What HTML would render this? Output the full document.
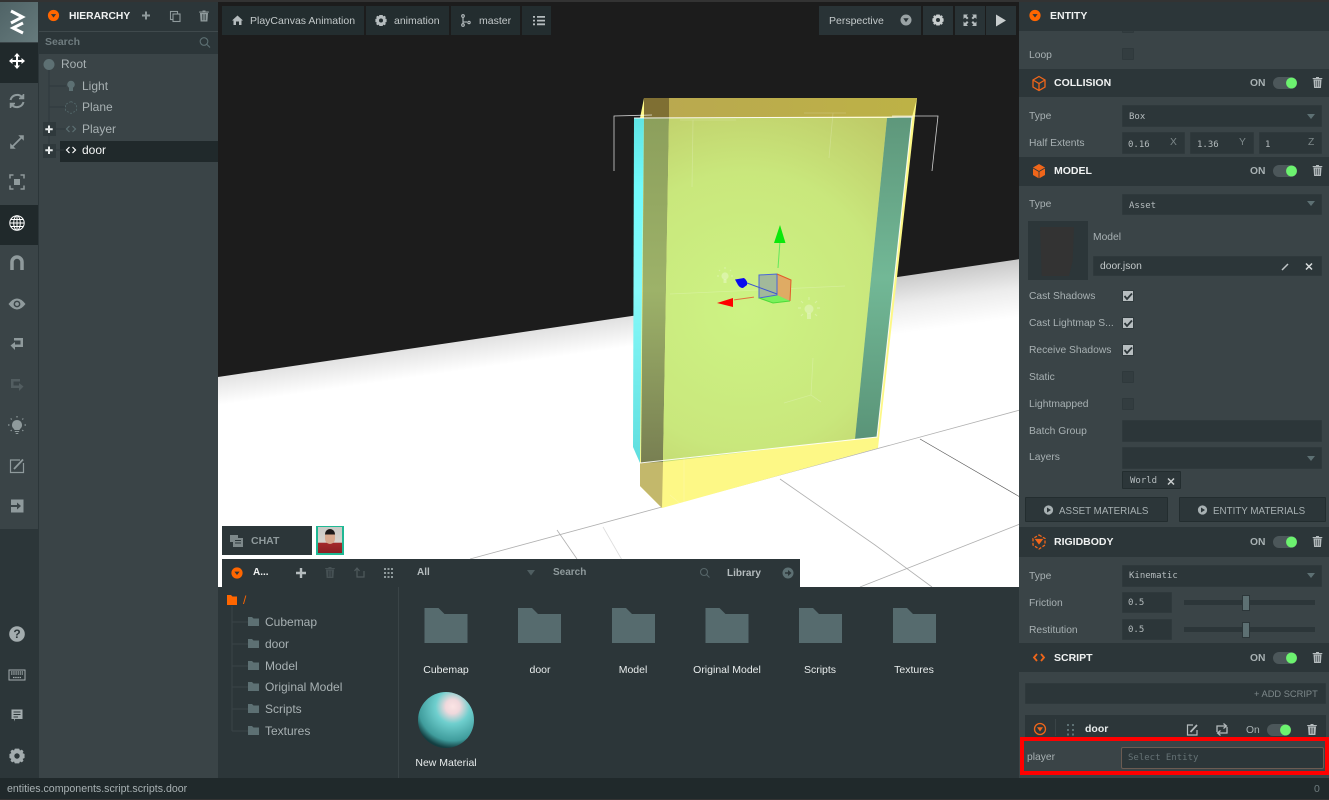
<!DOCTYPE html>
<html><head><meta charset="utf-8"><title>PlayCanvas Editor</title>
<style>
html,body{margin:0;padding:0;width:1329px;height:800px;overflow:hidden;background:#1c1c1c}
body{position:relative;font-family:"Liberation Sans",sans-serif;font-size:11px;color:#b5bcbe}
.b{position:absolute}
.t{position:absolute;white-space:nowrap;line-height:14px;height:14px}
.c{transform:translateX(-50%)}
.m{font-family:"DejaVu Sans Mono","Liberation Mono",monospace;font-size:9px;color:#b5bcbe}
.h{font-weight:bold;color:#f0f2f2;font-size:10.5px}
.l{color:#a8b1b3;font-size:10.3px;margin-top:1px}
.i{position:absolute;background:#2c3639;box-sizing:border-box;border:1px solid #2f393c;border-radius:1px}
.w{color:#e8ecec;font-size:10.5px}
svg{position:absolute;left:0;top:0}
</style></head><body>
<svg width="1329" height="800" viewBox="0 0 1329 800">
<defs>
<linearGradient id="fr" gradientUnits="userSpaceOnUse" x1="950" y1="268" x2="958" y2="326"><stop offset="0" stop-color="#c8c8c8"/><stop offset=".5" stop-color="#ececec"/><stop offset="1" stop-color="#fff"/></linearGradient>
<linearGradient id="fk" gradientUnits="userSpaceOnUse" x1="420" y1="348" x2="424" y2="376"><stop offset="0" stop-color="#e2e2e2"/><stop offset="1" stop-color="#fff"/></linearGradient>
<radialGradient id="gf" gradientUnits="userSpaceOnUse" cx="745" cy="310" r="230"><stop offset="0" stop-color="#cdf384"/><stop offset=".6" stop-color="#c9e77c"/><stop offset="1" stop-color="#bfcb68"/></radialGradient>
<linearGradient id="tp" x1="0" y1="0" x2="1" y2="0"><stop offset="0" stop-color="#b9a850"/><stop offset="1" stop-color="#bdb246"/></linearGradient>
<linearGradient id="ol" x1="0" y1="0" x2="0" y2="1"><stop offset="0" stop-color="#8c9f5c"/><stop offset=".5" stop-color="#9db269"/><stop offset="1" stop-color="#787f52"/></linearGradient>
<linearGradient id="te" x1="0" y1="0" x2="0" y2="1"><stop offset="0" stop-color="#5e977b"/><stop offset=".5" stop-color="#72b896"/><stop offset="1" stop-color="#5a9478"/></linearGradient>
<linearGradient id="cy" x1="0" y1="0" x2="0" y2="1"><stop offset="0" stop-color="#5fe4e4"/><stop offset=".2" stop-color="#70fbfb"/><stop offset=".5" stop-color="#86fafa"/><stop offset="1" stop-color="#5fdede"/></linearGradient>
<radialGradient id="sp" cx=".62" cy=".26" r=".85"><stop offset="0" stop-color="#fbe4e4"/><stop offset=".15" stop-color="#f0d8dc"/><stop offset=".36" stop-color="#6fcfce"/><stop offset=".72" stop-color="#3f9c9c"/><stop offset=".87" stop-color="#143f42"/><stop offset="1" stop-color="#123436"/></radialGradient>
<g id="tr"><path d="M-4 -3.5H4L3.4 5H-3.4Z" fill="currentColor"/><path d="M-4.8 -5H4.8V-3.9H-4.8ZM-1.5 -6H1.5V-5H-1.5Z" fill="currentColor"/><path d="M-1.7 -2.4V3.8M0 -2.4V3.8M1.7 -2.4V3.8" stroke="#2c3639" stroke-width=".6"/></g>
<g id="or"><circle r="5.6" fill="#f60"/><path d="M-2.6 -1.4H2.6L0 2Z" fill="#2c3639"/></g>
<g id="fo"><path d="M0 0H14L20 6H43V35H0Z" fill="#566b6e"/></g>
<g id="sf"><path d="M0 0H4L5.5 1.5H11V9H0Z" fill="#5d7073"/></g>
<g id="gr"><path d="M-1.6 -5.5H1.6L2.2 -4.1 3.6 -4.7 4.8 -3.5 4.2 -2.1 5.6 -1.5V1.5L4.2 2.1 4.8 3.5 3.6 4.7 2.2 4.1 1.6 5.5H-1.6L-2.2 4.1-3.6 4.7-4.8 3.5-4.2 2.1-5.6 1.5V-1.5L-4.2 -2.1-4.8 -3.5-3.6 -4.7-2.2 -4.1Z" fill="currentColor"/><circle r="2" fill="var(--h,#232d2f)"/></g>
<g id="tg"><rect x="-12" y="-6" width="24" height="12" rx="6" fill="#4c575a"/><circle cx="6.5" r="5.4" fill="#6cf26f"/></g>
</defs>

<!-- viewport -->
<rect x="218" y="0" width="802" height="590" fill="#1c1c1c"/>
<path d="M218 377 L700 306 V590 H218Z" fill="url(#fk)"/>
<path d="M700 306 L1020 259 V590 H700Z" fill="url(#fr)"/>
<g stroke="#b0b0b0" stroke-width=".8" fill="none">
<path d="M470 559L1020 410"/><path d="M557 530L577 559"/><path d="M780 479L875 545 932 587"/><path d="M860 587L1020 524"/>
<path d="M603 527L622 560" stroke="#ddd"/>
</g>
<path d="M920 439L1020 497" stroke="#555" stroke-width=".6" fill="none"/>
<!-- door -->
<path d="M644 98H917L878 448 662 508 640 486V118Z" fill="#fdf886"/>
<path d="M640 463L663 462 662 508 640 486Z" fill="#c3b86b"/>
<path d="M644 98H917L912 117 644 118Z" fill="url(#tp)"/>
<path d="M644 98H669V118H644Z" fill="#7f6f33"/>
<path d="M634 118H644L640 463 633 447Z" fill="url(#cy)"/>
<path d="M644 118H669L663 462 641 463Z" fill="url(#ol)"/>
<path d="M669 118H887L855 439 663 462Z" fill="url(#gf)"/>
<path d="M887 118L912 117 877 437 855 439Z" fill="url(#te)"/>
<path d="M634 118L912 117 877 437 640 463" fill="none" stroke="#fff" stroke-opacity=".9" stroke-width="1"/>
<g fill="none" stroke="#fff" stroke-opacity=".8" stroke-width=".8">
<path d="M614 171V116L652 115M892 116H938L932 171"/>
</g>
<g fill="none" stroke="#fff" stroke-opacity=".2" stroke-width=".8">
<path d="M680 120L736 120M693 120L692 187M804 113H846M833 113L829 158M670 294L845 286M813 358L811 395 784 403M811 395L821 402M684 457V505M670 495L683 506"/>
</g>
<!-- gizmo -->
<path d="M759 275L777 274 791 280 790 301 773 303 759 298Z" fill="#a2b99a"/>
<path d="M777 274L791 280 790 301 777 295Z" fill="#dfab64"/>
<path d="M759 298L777 295 790 301 773 303Z" fill="#7bf05b"/>
<path d="M759 275L777 274V295L759 298Z" fill="none" stroke="#4a66d8"/>
<path d="M777 274L791 280 790 301" fill="none" stroke="#e25a2a"/>
<path d="M759 298L773 303 790 301" fill="none" stroke="#4ddb3a"/>
<path d="M778 268L780 241" stroke="#62e85a" stroke-width="1"/>
<path d="M780 225L785.500 243H774Z" fill="#0be80b"/>
<path d="M777 294L747 283" stroke="#3c55d0" stroke-width="1"/>
<path d="M735 279.500L744 278Q748 281 747 285L743 288Q740 288 738 285Z" fill="#0a0aee"/>
<path d="M734 299L754 298" stroke="#e2703c" stroke-width="1" transform="rotate(-5 744 298)"/>
<path d="M717 303L733 298V307Z" fill="#f00"/>
<g fill="#fff" fill-opacity=".3"><circle cx="725" cy="276" r="3.600"/><rect x="723.500" y="279" width="3" height="4"/><circle cx="809" cy="309" r="4.500"/><rect x="807" y="313" width="4" height="6"/></g>
<g stroke="#fff" stroke-opacity=".25" stroke-width="1.200" fill="none"><path d="M725 267v2M717 276h2M731 276h2M719 270l1 1M730 271l1-1M809 297v3M798 308h3M817 308h3M801 301l2 2M815 303l2-2M801 316l2-2M815 314l2 2"/></g>
</svg>

<!-- top bar buttons -->
<div class="b" style="left:222px;top:6px;width:142px;height:29px;background:#232d2f"></div>
<div class="b" style="left:366px;top:6px;width:83px;height:29px;background:#232d2f"></div>
<div class="b" style="left:451px;top:6px;width:69px;height:29px;background:#232d2f"></div>
<div class="b" style="left:522px;top:6px;width:29px;height:29px;background:#232d2f"></div>
<div class="b" style="left:819px;top:6px;width:102px;height:29px;background:#293336"></div>
<div class="b" style="left:923px;top:6px;width:30px;height:29px;background:#293336"></div>
<div class="b" style="left:955px;top:6px;width:30px;height:29px;background:#293336"></div>
<div class="b" style="left:986px;top:6px;width:30px;height:29px;background:#293336"></div>

<!-- panels -->
<div class="b" style="left:0;top:0;width:1329px;height:2px;background:#333"></div>
<div class="b" style="left:0;top:2px;width:38px;height:776px;background:#3a4447"></div>
<div class="b" style="left:38px;top:2px;width:1px;height:776px;background:#2c3639"></div>
<div class="b" style="left:0;top:2px;width:38px;height:40px;background:linear-gradient(135deg,#4f6366,#667a7c)"></div>
<div class="b" style="left:0;top:43px;width:38px;height:40px;background:#20292b"></div>
<div class="b" style="left:0;top:205px;width:38px;height:40px;background:#20292b"></div>
<div class="b" style="left:0;top:529px;width:38px;height:249px;background:#2c3639"></div>
<div class="b" style="left:39px;top:2px;width:179px;height:776px;background:#3a4447"></div>
<div class="b" style="left:39px;top:2px;width:179px;height:29px;background:#2c3639"></div>
<div class="b" style="left:39px;top:31px;width:179px;height:1px;background:#3f494c"></div>
<div class="b" style="left:39px;top:32px;width:179px;height:22px;background:#2c3639"></div>
<div class="b" style="left:60px;top:141px;width:158px;height:21px;background:#20292b"></div>
<div class="b" style="left:43px;top:122px;width:13px;height:14px;background:#2f393c"></div>
<div class="b" style="left:43px;top:144px;width:13px;height:14px;background:#2f393c"></div>

<div class="b" style="left:222px;top:526px;width:90px;height:29px;background:#2c3639"></div>
<div class="b" style="left:316px;top:526px;width:28px;height:29px;background:#1fb894"></div>
<div class="b" style="left:318px;top:527px;width:24px;height:26px;background:linear-gradient(#c9c9c5 0,#d8d4cd 60%,#a32a2a 61%,#8c1f24 100%)"></div>
<div class="b" style="left:325px;top:529px;width:10px;height:15px;border-radius:5px;background:linear-gradient(#1d1a1a 35%,#d7a98e 36%)"></div>
<div class="b" style="left:222px;top:559px;width:578px;height:28px;background:#2c3639"></div>
<div class="b" style="left:218px;top:587px;width:801px;height:191px;background:#2c3639"></div>
<div class="b" style="left:398px;top:587px;width:1px;height:191px;background:#3a4447"></div>

<div class="b" style="left:1019px;top:2px;width:310px;height:776px;background:#3a4447"></div>
<div class="b" style="left:1019px;top:2px;width:310px;height:29px;background:#2c3639"></div>
<div class="b" style="left:1019px;top:69px;width:310px;height:28px;background:#2c3639"></div>
<div class="b" style="left:1019px;top:157px;width:310px;height:29px;background:#2c3639"></div>
<div class="b" style="left:1019px;top:527px;width:310px;height:30px;background:#2c3639"></div>
<div class="b" style="left:1019px;top:643px;width:310px;height:29px;background:#2c3639"></div>
<div class="b" style="left:1025px;top:715px;width:301px;height:23px;background:#2c3639"></div>
<div class="b" style="left:0;top:778px;width:1329px;height:22px;background:#20292b"></div>
<div class="b" style="left:0;top:799px;width:1329px;height:1px;background:#333"></div>

<!-- inputs -->
<div class="i" style="left:1122px;top:21px;width:12px;height:12px;background:#333d40"></div>
<div class="b" style="left:1019px;top:2px;width:310px;height:29px;background:#2c3639"></div>
<div class="i" style="left:1122px;top:48px;width:12px;height:12px;background:#333d40"></div>
<div class="i" style="left:1122px;top:105px;width:200px;height:22px"></div>
<div class="i" style="left:1122px;top:132px;width:63px;height:22px"></div>
<div class="i" style="left:1190px;top:132px;width:64px;height:22px"></div>
<div class="i" style="left:1259px;top:132px;width:63px;height:22px"></div>
<div class="i" style="left:1122px;top:194px;width:200px;height:21px"></div>
<div class="b" style="left:1028px;top:221px;width:60px;height:59px;background:#2c3639"></div>
<div class="b" style="left:1040px;top:227px;width:34px;height:49px;background:#333;clip-path:polygon(0 0,100% 0,96% 70%,85% 100%,5% 100%)"></div>
<div class="i" style="left:1093px;top:256px;width:229px;height:20px"></div>
<div class="i" style="left:1122px;top:290px;width:12px;height:12px;background:#b7bec0"></div>
<div class="i" style="left:1122px;top:317px;width:12px;height:12px;background:#b7bec0"></div>
<div class="i" style="left:1122px;top:344px;width:12px;height:12px;background:#b7bec0"></div>
<div class="i" style="left:1122px;top:371px;width:12px;height:12px;background:#333d40"></div>
<div class="i" style="left:1122px;top:398px;width:12px;height:12px;background:#333d40"></div>
<div class="i" style="left:1122px;top:420px;width:200px;height:22px"></div>
<div class="i" style="left:1122px;top:447px;width:200px;height:22px"></div>
<div class="i" style="left:1122px;top:471px;width:59px;height:18px;border-color:#232d2f"></div>
<div class="i" style="left:1025px;top:497px;width:143px;height:25px;border-color:#232d2f"></div>
<div class="i" style="left:1179px;top:497px;width:147px;height:25px;border-color:#232d2f"></div>
<div class="i" style="left:1122px;top:565px;width:200px;height:22px"></div>
<div class="i" style="left:1122px;top:592px;width:50px;height:21px"></div>
<div class="i" style="left:1122px;top:619px;width:50px;height:21px"></div>
<div class="b" style="left:1184px;top:600px;width:131px;height:5px;background:#2c3639"></div>
<div class="b" style="left:1184px;top:627px;width:131px;height:5px;background:#2c3639"></div>
<div class="b" style="left:1242px;top:595px;width:8px;height:16px;background:#5d7073;border:1px solid #2c3639;box-sizing:border-box"></div>
<div class="b" style="left:1242px;top:622px;width:8px;height:16px;background:#5d7073;border:1px solid #2c3639;box-sizing:border-box"></div>
<div class="i" style="left:1025px;top:683px;width:301px;height:21px"></div>
<div class="i" style="left:1121px;top:747px;width:203px;height:22px;border:1px solid #6b5b52;border-radius:2px;background:#2c3639"></div>
<div class="b" style="left:1020px;top:737px;width:309px;height:38px;border:4px solid #f00;box-sizing:border-box"></div>

<!-- icons overlay -->
<svg width="1329" height="800" viewBox="0 0 1329 800">
<!-- logo -->
<g fill="none" stroke="#fff" stroke-width="3"><path d="M11 11L22.500 17 11 23"/><path d="M23 23L13 28 23 33"/></g>
<!-- left rail -->
<g fill="#fff" transform="translate(17,61)"><path d="M-1 -5H1V5H-1ZM-5 -1H5V1H-5Z"/><path d="M0 -8L3 -4.500H-3ZM0 8L3 4.500H-3ZM-8 0L-4.500 -3V3ZM8 0L4.500 -3V3Z"/></g>
<g fill="none" stroke="#8f9a9c" stroke-width="2" transform="translate(17,101)"><path d="M-6.500 -1A6.800 6.800 0 0 1 5 -4M6.500 1A6.800 6.800 0 0 1 -5 4"/><path d="M6.500 -7V-2.500H2M-6.500 7V2.500H-2" stroke-width="1.500" fill="#8f9a9c"/></g>
<g transform="translate(17,142)" stroke="#8f9a9c" stroke-width="1.800" fill="#8f9a9c"><path d="M-5 5L5 -5" fill="none"/><path d="M2 -6.500H6.500V-2ZM-6.500 2V6.500H-2Z" stroke-width=".6"/></g>
<g transform="translate(17,182)" fill="none" stroke="#8f9a9c" stroke-width="1.500"><path d="M-7 -3.500V-7H-3.500M3.500 -7H7V-3.500M7 3.500V7H3.500M-3.500 7H-7V3.500"/><rect x="-3" y="-3" width="6" height="6" fill="#8f9a9c" stroke="none"/></g>
<g transform="translate(17,223)" fill="none" stroke="#fff" stroke-width="1"><circle r="7.200"/><ellipse rx="3.300" ry="7.200"/><path d="M0 -7V7M-7 0H7M-6.300 -3.500H6.300M-6.300 3.500H6.300"/></g>
<g transform="translate(17,263)" fill="none" stroke="#8f9a9c" stroke-width="3.500"><path d="M-5 7V-1A5 5 0 0 1 5 -1V7"/></g>
<g transform="translate(17,304)"><path d="M-8.500 0Q0 -11 8.500 0Q0 11 -8.500 0Z" fill="#8f9a9c"/><circle r="3.400" fill="#3a4447"/><circle r="1.900" fill="#8f9a9c"/></g>
<g transform="translate(17,344)" fill="#8f9a9c"><path d="M-3 -6H6V3H-2V0.500H3.500V-3.500H-3Z"/><path d="M-6.500 1.500L-2 -2V6Z"/></g>
<g transform="translate(17,385)" fill="#525d60"><path d="M3 -6H-6V3H2V0.500H-3.500V-3.500H3Z"/><path d="M6.500 1.500L2 -2V6Z"/></g>
<g transform="translate(17,425)" fill="#8f9a9c"><path d="M0 -5A5 5 0 0 1 3 4L2.500 5H-2.500L-3 4A5 5 0 0 1 0 -5Z"/><path d="M-2.200 6H2.200V7H-2.200ZM-1.300 8H1.300V9H-1.300Z"/><path d="M0 -9v1.500M-6.300 -6.500l1 1M6.300 -6.500l-1 1M-9 0h1.500M9 0h-1.500M-6.300 6l1 -1M6.300 6l-1 -1" stroke="#8f9a9c" stroke-width="1.200"/></g>
<g transform="translate(17,466)" fill="none" stroke="#8f9a9c" stroke-width="1.200"><path d="M3 -6H-6.500V6.500H6.500V-3"/><path d="M-3 3L6 -6.500" stroke-width="1.800"/></g>
<g transform="translate(17,506)"><rect x="-6" y="-6.500" width="12.500" height="13" fill="#8f9a9c"/><path d="M-6.500 -1H0V-3.500L4 0 0 3.500V1H-6.500Z" fill="#3a4447"/></g>
<g transform="translate(17,634)"><circle r="7.800" fill="#a3acae"/><text x="0" y="4.200" text-anchor="middle" font-family="Liberation Sans" font-weight="bold" font-size="12" fill="#2c3639">?</text></g>
<g transform="translate(17,675)"><rect x="-8" y="-5" width="16" height="10" fill="none" stroke="#a3acae" stroke-width="1"/><path d="M-6 -3H6M-6 -1H6M-4 2.500H4" stroke="#a3acae" stroke-width="1.300" stroke-dasharray="1.500 .7"/></g>
<g transform="translate(17,715)" fill="#a3acae"><path d="M-5.500 -5.500H5.500V4H-2L-3 6.500V4H-5.500Z"/><path d="M-3.500 -3H3.500M-3.500 -.5H3.500M-3.500 2H1" stroke="#2c3639" stroke-width="1"/></g>
<g transform="translate(17,756) scale(1.350)" color="#a3acae" style="--h:#2c3639"><use href="#gr"/></g>

<!-- hierarchy -->
<use href="#or" x="53.500" y="15.500"/>
<g fill="#8f9a9c"><path d="M145 11.500h2v8h-2zM142 14.500h8v2h-8z"/></g>
<g fill="none" stroke="#8f9a9c" stroke-width="1.100"><rect x="170.500" y="11.500" width="7" height="8"/><rect x="173" y="14" width="7" height="7.500" fill="#2c3639"/></g>
<use href="#tr" x="204" y="16.500" color="#8f9a9c"/>
<g fill="none" stroke="#5d7073" stroke-width="1.100"><circle cx="204" cy="41.500" r="3.800"/><path d="M207 44.500L210 47.500"/></g>
<g fill="none" stroke="#2f393c" stroke-width="1"><path d="M49 64V150M49 86H66M49 107H66M49 129H66M49 150H64"/></g>
<circle cx="49" cy="64.500" r="5.500" fill="#5d7073"/>
<g fill="#5d7073"><circle cx="71" cy="84.500" r="3.800"/><rect x="69" y="87" width="4" height="4"/></g>
<g fill="none" stroke="#4f6265" stroke-width="1" stroke-dasharray="2 1.500"><path d="M71 101.500L76.500 104.500V110.500L71 113.500 65.500 110.500V104.500Z"/></g>
<g fill="none" stroke="#5d7073" stroke-width="1.200"><path d="M69.500 126L66.500 129 69.500 132M72.500 126L75.500 129 72.500 132"/></g>
<g fill="none" stroke="#fff" stroke-width="1.200"><path d="M69.500 147L66.500 150 69.500 153M72.500 147L75.500 150 72.500 153"/></g>
<g fill="#e8ecec"><path d="M48 125.500h2v7.500h-2zM45.300 128.300h7.400v2h-7.400z"/><path d="M48 146.500h2v7.500h-2zM45.300 149.300h7.400v2h-7.400z"/></g>

<!-- topbar icons -->
<g fill="#b5bcbe"><path d="M237.500 15.500L243 20.500H241.500V25H239V21.500H236V25H233.500V20.500H232Z"/></g>
<use href="#gr" x="381" y="20.500" color="#b5bcbe"/>
<g fill="none" stroke="#b5bcbe" stroke-width="1.100"><path d="M463 17.500V24"/><circle cx="463" cy="16" r="1.300"/><circle cx="463" cy="25" r="1.300"/><circle cx="469" cy="22.500" r="1.200"/><path d="M463 22H467"/></g>
<g fill="#b5bcbe"><path d="M533 16h2v1.800h-2zM533 19.700h2v1.800h-2zM533 23.400h2v1.800h-2zM537 16h8v1.800h-8zM537 19.700h8v1.800h-8zM537 23.400h8v1.800h-8z"/></g>
<circle cx="906" cy="20" r="5.500" fill="#9aa3a5"/><path d="M903.300 18.300H908.700L906 22.300Z" fill="#293336"/>
<g style="--h:#293336" color="#c8cdce"><use href="#gr" x="938" y="20"/></g>
<g fill="#b5bcbe"><path d="M963.500 14.500H968L966.600 16 968.500 18 967 19.400 965 17.500 963.500 19ZM976.500 14.500H972L973.400 16 971.500 18 973 19.400 975 17.500 976.500 19ZM963.500 26H968L966.600 24.500 968.500 22.500 967 21 965 23 963.500 21.500ZM976.500 26H972L973.400 24.500 971.500 22.500 973 21 975 23 976.500 21.500Z"/></g>
<path d="M996 14.500L1006 20.500 996 26.500Z" fill="#c8cdce"/>

<!-- chat & assets toolbar -->
<g fill="#7d888a"><rect x="230" y="535" width="8" height="7"/><rect x="233" y="538" width="10" height="9"/><path d="M235 540.500h6M235 543h6" stroke="#2c3639" stroke-width="1"/></g>
<use href="#or" x="237" y="573"/>
<path d="M299.800 568h2.400v10h-2.400zM296 571.800h10v2.400h-10z" fill="#b5bcbe"/>
<use href="#tr" x="330" y="573" color="#465154"/>
<g fill="none" stroke="#4f5a5d" stroke-width="1.200"><path d="M357 569V577H364V571"/><path d="M354.500 571L357 568 359.500 571"/></g>
<g fill="#8f9a9c"><path d="M384 568h2v2h-2zM387.500 568h2v2h-2zM391 568h2v2h-2zM384 572h2v2h-2zM387.500 572h2v2h-2zM391 572h2v2h-2zM384 576h2v2h-2zM387.500 576h2v2h-2zM391 576h2v2h-2z"/></g>
<path d="M527 570H535L531 575.500Z" fill="#4f5e61"/>
<g fill="none" stroke="#566568" stroke-width="1.100"><circle cx="704" cy="572" r="3.500"/><path d="M706.500 574.500L709.500 577.500"/></g>
<circle cx="788" cy="573" r="5.500" fill="#5d7073"/><path d="M785 572.300H788V570L791.500 573 788 576V573.700H785Z" fill="#2c3639"/>

<!-- asset tree -->
<path d="M227 595H231L232.500 596.500H237V605H227Z" fill="#f60"/>
<g fill="none" stroke="#3a4447" stroke-width="1"><path d="M232 606V731M232 622H248M232 644H248M232 666H248M232 687H248M232 709H248M232 731H248"/></g>
<use href="#sf" x="248" y="617"/><use href="#sf" x="248" y="639"/><use href="#sf" x="248" y="661"/><use href="#sf" x="248" y="682"/><use href="#sf" x="248" y="704"/><use href="#sf" x="248" y="726"/>
<use href="#fo" x="424.500" y="608"/><use href="#fo" x="518" y="608"/><use href="#fo" x="612" y="608"/><use href="#fo" x="705.500" y="608"/><use href="#fo" x="799" y="608"/><use href="#fo" x="893" y="608"/>
<circle cx="446" cy="720" r="28" fill="url(#sp)"/>

<!-- entity icons -->
<use href="#or" x="1035" y="15.500"/>
<g fill="none" stroke="#f0661a" stroke-width="1.300"><path d="M1039 76.500L1045 80 1045 87 1039 90.500 1033 87V80ZM1033 80L1039 83.500 1045 80M1039 83.500V90.500"/></g>
<path d="M1039 164L1045 167.500V175L1039 178.500 1033 175V167.500Z" fill="#f0661a"/><path d="M1033 168L1039 171.500 1045 168M1039 171.500V178.500" stroke="#2c3639" stroke-width=".8" fill="none"/>
<g fill="none" stroke="#f0661a" stroke-width="1.300"><path d="M1039 535L1045 538.500V545L1039 549 1033 545V538.500Z" stroke-dasharray="3 1.500"/><path d="M1036 539.500H1042L1039 543.500Z" fill="#f0661a"/></g>
<g fill="none" stroke="#f0661a" stroke-width="1.800"><path d="M1037 654L1034 657.500 1037 661M1041 654L1044 657.500 1041 661"/></g>
<use href="#tg" x="1285" y="83"/><use href="#tg" x="1285" y="171"/><use href="#tg" x="1285" y="542"/><use href="#tg" x="1285" y="658"/><use href="#tg" x="1279" y="730"/>
<g color="#b5bcbe"><use href="#tr" x="1317.500" y="83"/><use href="#tr" x="1317.500" y="171"/><use href="#tr" x="1317.500" y="542"/><use href="#tr" x="1317.500" y="658"/><use href="#tr" x="1312" y="730"/></g>
<path d="M1282 270L1288 264" stroke="#c0c6c7" stroke-width="1.500"/>
<path d="M1306 263.500L1312 269.500M1312 263.500L1306 269.500" stroke="#d8dcdd" stroke-width="1.500"/>
<path d="M1307 200L1315 200 1311 205Z" fill="#5d7073" transform="translate(0,1)"/>
<path d="M1307 114H1315L1311 119Z" fill="#5d7073"/><path d="M1307 456H1315L1311 461Z" fill="#5d7073"/><path d="M1307 573H1315L1311 578Z" fill="#5d7073"/>
<g fill="none" stroke="#2c3639" stroke-width="1.800"><path d="M1124.500 296L1127 299 1132 293.500"/><path d="M1124.500 323L1127 326 1132 320.500"/><path d="M1124.500 350L1127 353 1132 347.500"/></g>
<path d="M1168 478.500L1174 484.500M1174 478.500L1168 484.500" stroke="#c8cdce" stroke-width="1.500"/>
<circle cx="1048.500" cy="510" r="4.600" fill="#a8b1b3"/><path d="M1047 507.500L1051 510 1047 512.500Z" fill="#2c3639"/>
<circle cx="1202.500" cy="510" r="4.600" fill="#a8b1b3"/><path d="M1201 507.500L1205 510 1201 512.500Z" fill="#2c3639"/>
<g><circle cx="1040" cy="729" r="5.500" fill="none" stroke="#f0661a" stroke-width="1.300"/><path d="M1037 727.300H1043L1040 731.500Z" fill="#f0661a"/></g>
<path d="M1055.500 719V736" stroke="#3a4447"/>
<g fill="#5d7073"><path d="M1067 724h2v2h-2zM1072 724h2v2h-2zM1067 729h2v2h-2zM1072 729h2v2h-2zM1067 733.500h2v2h-2zM1072 733.500h2v2h-2z"/></g>
<g fill="none" stroke="#b5bcbe" stroke-width="1.200"><path d="M1193 725H1187.500V735H1197V730"/><path d="M1190.500 732L1197 725" stroke-width="1.700"/></g>
<g fill="none" stroke="#b5bcbe" stroke-width="1.300"><path d="M1217 732V726H1226M1227 727V733H1218"/><path d="M1223.500 723.500L1226.500 726 1223.500 728.500M1220.500 730.500L1217.500 733 1220.500 735.500" stroke-width="1.200"/></g>
</svg>

<!-- text -->
<span class="t h" style="left:69px;top:10px;font-size:10.300px">HIERARCHY</span>
<span class="t" style="left:45px;top:35px;font-size:10.500px;font-weight:bold;color:#6f7c7f">Search</span>
<span class="t" style="left:61px;top:57px;font-size:12px;color:#a8b1b3">Root</span>
<span class="t" style="left:82px;top:79px;font-size:12px;color:#a8b1b3">Light</span>
<span class="t" style="left:82px;top:100px;font-size:12px;color:#a8b1b3">Plane</span>
<span class="t" style="left:82px;top:122px;font-size:12px;color:#a8b1b3">Player</span>
<span class="t" style="left:82px;top:143px;font-size:12px;color:#f4f6f6">door</span>

<span class="t" style="left:250px;top:14px;font-size:10.500px;color:#c3c9ca">PlayCanvas Animation</span>
<span class="t" style="left:394px;top:14px;font-size:10.500px;color:#c3c9ca">animation</span>
<span class="t" style="left:479px;top:14px;font-size:10.500px;color:#c3c9ca">master</span>
<span class="t" style="left:829px;top:14px;font-size:10.500px;color:#c3c9ca">Perspective</span>

<span class="t" style="left:251px;top:534px;font-size:10.500px;font-weight:bold;color:#8f9a9c">CHAT</span>
<span class="t" style="left:253px;top:566px;font-size:10px;font-weight:bold;color:#f0f2f2">A...</span>
<span class="t" style="left:417px;top:566px;font-size:10px;font-weight:bold;color:#b5bcbe">All</span>
<span class="t" style="left:553px;top:566px;font-size:10px;font-weight:bold;color:#8f9a9c">Search</span>
<span class="t" style="left:727px;top:567px;font-size:10px;font-weight:bold;color:#b5bcbe">Library</span>

<span class="t" style="left:243px;top:593px;font-size:12px;color:#f60">/</span>
<span class="t" style="left:265px;top:615px;font-size:12px;color:#a8b1b3">Cubemap</span>
<span class="t" style="left:265px;top:637px;font-size:12px;color:#a8b1b3">door</span>
<span class="t" style="left:265px;top:659px;font-size:12px;color:#a8b1b3">Model</span>
<span class="t" style="left:265px;top:680px;font-size:12px;color:#a8b1b3">Original Model</span>
<span class="t" style="left:265px;top:702px;font-size:12px;color:#a8b1b3">Scripts</span>
<span class="t" style="left:265px;top:724px;font-size:12px;color:#a8b1b3">Textures</span>

<span class="t c w" style="left:446px;top:663px">Cubemap</span>
<span class="t c w" style="left:540px;top:663px">door</span>
<span class="t c w" style="left:633px;top:663px">Model</span>
<span class="t c w" style="left:727px;top:663px">Original Model</span>
<span class="t c w" style="left:820px;top:663px">Scripts</span>
<span class="t c w" style="left:914px;top:663px">Textures</span>
<span class="t c w" style="left:446px;top:756px">New Material</span>

<span class="t" style="left:7px;top:782px;font-size:10.600px;color:#a8b1b3">entities.components.script.scripts.door</span>
<span class="t" style="left:1314px;top:782px;font-size:10.500px;color:#6f7c7f">0</span>

<span class="t h" style="left:1050px;top:9px">ENTITY</span>
<span class="t l" style="left:1029px;top:48px">Loop</span>
<span class="t h" style="left:1054px;top:76px">COLLISION</span>
<span class="t l" style="left:1250px;top:76px;font-weight:bold">ON</span>
<span class="t l" style="left:1029px;top:109px">Type</span>
<span class="t m" style="left:1129px;top:110px">Box</span>
<span class="t l" style="left:1029px;top:136px">Half Extents</span>
<span class="t m" style="left:1128px;top:138px">0.16</span><span class="t l" style="left:1170px;top:135px;color:#7d888a">X</span>
<span class="t m" style="left:1197px;top:138px">1.36</span><span class="t l" style="left:1239px;top:135px;color:#7d888a">Y</span>
<span class="t m" style="left:1265px;top:138px">1</span><span class="t l" style="left:1308px;top:135px;color:#7d888a">Z</span>
<span class="t h" style="left:1054px;top:164px">MODEL</span>
<span class="t l" style="left:1250px;top:164px;font-weight:bold">ON</span>
<span class="t l" style="left:1029px;top:197px">Type</span>
<span class="t m" style="left:1129px;top:199px">Asset</span>
<span class="t l" style="left:1093px;top:230px">Model</span>
<span class="t l" style="left:1100px;top:259px;color:#c3c9ca">door.json</span>
<span class="t l" style="left:1029px;top:289px">Cast Shadows</span>
<span class="t l" style="left:1029px;top:316px">Cast Lightmap S...</span>
<span class="t l" style="left:1029px;top:343px">Receive Shadows</span>
<span class="t l" style="left:1029px;top:370px">Static</span>
<span class="t l" style="left:1029px;top:397px">Lightmapped</span>
<span class="t l" style="left:1029px;top:424px">Batch Group</span>
<span class="t l" style="left:1029px;top:450px">Layers</span>
<span class="t m" style="left:1130px;top:474px">World</span>
<span class="t l" style="left:1059px;top:504px;font-size:9.800px">ASSET MATERIALS</span>
<span class="t l" style="left:1213px;top:504px;font-size:9.800px">ENTITY MATERIALS</span>
<span class="t h" style="left:1054px;top:535px">RIGIDBODY</span>
<span class="t l" style="left:1250px;top:535px;font-weight:bold">ON</span>
<span class="t l" style="left:1029px;top:569px">Type</span>
<span class="t m" style="left:1129px;top:569px">Kinematic</span>
<span class="t l" style="left:1029px;top:596px">Friction</span>
<span class="t m" style="left:1128px;top:596px">0.5</span>
<span class="t l" style="left:1029px;top:623px">Restitution</span>
<span class="t m" style="left:1128px;top:623px">0.5</span>
<span class="t h" style="left:1054px;top:651px">SCRIPT</span>
<span class="t l" style="left:1250px;top:651px;font-weight:bold">ON</span>
<span class="t l" style="left:1254px;top:686px;color:#7d888a;font-size:9.300px">+ ADD SCRIPT</span>
<span class="t" style="left:1085px;top:722px;font-size:10.500px;font-weight:bold;color:#e8ecec">door</span>
<span class="t l" style="left:1246px;top:723px">On</span>
<span class="t l" style="left:1027px;top:750px">player</span>
<span class="t m" style="left:1128px;top:751px;color:#667376">Select Entity</span>
</body></html>
